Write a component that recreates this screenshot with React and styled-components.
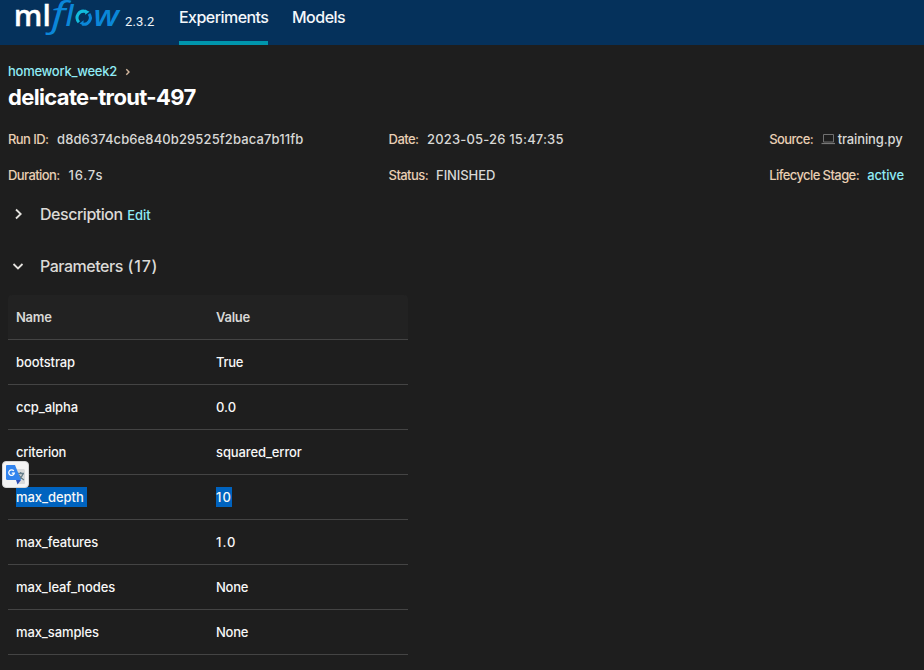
import React from 'react';
import styled, { createGlobalStyle } from 'styled-components';

const GlobalStyle = createGlobalStyle`
  * { box-sizing: border-box; }
  html, body { margin: 0; background: #1e1e1e; }
  body {
    height: 670px;
    overflow: hidden;
    color: #dcdad7;
    font-family: Inter, Roboto, sans-serif;
    font-size: 13px;
    font-weight: 450;
    line-height: 20px;
  }
  a { text-decoration: none; }
`;

const Text = styled.span`
  white-space: nowrap;
  letter-spacing: ${(p) => p.$track || 0}px;
`;

const Header = styled.header`
  display: flex;
  height: 45px;
  background: #05315b;
  color: #fff;
`;

const Logo = styled.svg`
  display: block;
  flex: none;
  width: 125px;
  height: 45px;
`;

const Version = styled(Text)`
  width: 54px;
  padding-top: 12px;
  font-family: Roboto, sans-serif;
  font-size: 13px;
  color: #f0f4f8;
`;

const Nav = styled.nav`
  display: flex;
  gap: 24px;
`;

const NavLink = styled.a`
  height: 45px;
  width: ${(p) => p.$width}px;
  padding-top: 7px;
  border-bottom: 4px solid ${(p) => (p.$active ? '#0096ad' : 'transparent')};
  font-size: 16px;
  color: #f4f7fa;
`;

const Page = styled.main`
  padding: 16px 8px 0;
`;

const Breadcrumb = styled.div`
  display: flex;
  align-items: center;
  height: 20px;
  color: #90ebf5;
`;

const Title = styled.h1`
  margin: 0;
  height: 32px;
  font-size: 22px;
  line-height: 33px;
  font-weight: 700;
  color: #fff;
`;

const Metadata = styled.dl`
  display: grid;
  grid-template-columns: 380.6px 380.6px 1fr;
  row-gap: 16px;
  margin: 16px 0 0;
`;

const Item = styled.div`
  display: flex;
  align-items: center;
  height: 20px;
`;

const Label = styled.dt`
  width: ${(p) => p.$width}px;
  flex: none;
  white-space: nowrap;
  letter-spacing: -0.58px;
  color: #e9cfb4;
`;

const Value = styled.dd`
  display: flex;
  align-items: center;
  margin: 0;
  color: ${(p) => (p.$link ? '#90ebf5' : '#d8d8d6')};
`;

const Section = styled.section`
  display: flex;
  align-items: center;
  height: 24px;
  margin-top: ${(p) => p.$top}px;
  font-size: 16px;
`;

const Toggle = styled.svg`
  width: 20px;
  height: 20px;
  margin-right: 12px;
  fill: none;
  stroke: #e4e2de;
  stroke-width: 1.8;
`;

const Edit = styled.a`
  margin: 2px 0 0 4.5px;
  font-size: 13px;
  color: #90ebf5;
`;

const Count = styled(Text)`
  margin-left: 4.5px;
`;

const Table = styled.div`
  width: 400px;
  margin-top: 17px;
`;

const Row = styled.div`
  position: relative;
  display: grid;
  grid-template-columns: 200px 200px;
  align-items: center;
  height: 45px;
  border-bottom: 1px solid #444;
  color: #f7f7f7;
  font-weight: 500;
`;

const HeadRow = styled(Row)`
  background: #222;
  border-radius: 4px 4px 0 0;
  color: #d8d8d6;
  font-weight: 600;
  letter-spacing: -0.25px;
`;

const Cell = styled.div`
  padding-left: 8px;
`;

const Mark = styled(Text)`
  display: inline-block;
  height: 20px;
  width: ${(p) => p.$width}px;
  background: #0063bf;
  vertical-align: top;
`;

const TranslateBadge = styled.div`
  position: absolute;
  left: -6px;
  top: -14px;
  width: 27px;
  height: 27px;
  border-radius: 4px;
  border: 1px solid #d4d4d4;
  background: #f4f4f4;
`;

const Drawing = styled.svg`
  display: block;
  flex: none;
`;

const rows = [
  ['bootstrap', -0.1, 'True', -0.25],
  ['ccp_alpha', -0.1, '0.0', 0],
  ['criterion', -0.2, 'squared_error', -0.12],
  ['max_depth', -0.05, '10', 1.1, true],
  ['max_features', -0.12, '1.0', 1],
  ['max_leaf_nodes', -0.1, 'None', -0.25],
  ['max_samples', -0.1, 'None', -0.25],
];

function MlflowLogo() {
  return (
    <Logo viewBox="0 0 125 45">
      <text x="13.8" y="26" fontFamily="Open Sans" fontWeight="600" fontSize="28.5" fill="#fff" stroke="#fff" strokeWidth="0.3" textLength="37" lengthAdjust="spacingAndGlyphs">ml</text>
      <g fill="#0b87d8" fontFamily="Open Sans" fontStyle="italic" fontWeight="500">
        <text x="51" y="26.5" fontSize="34" textLength="14.5" lengthAdjust="spacingAndGlyphs">f</text>
        <text x="65.5" y="26" fontSize="29" fontWeight="600">l</text>
        <text x="93.5" y="26" fontSize="28.5" fontWeight="600" textLength="25.5" lengthAdjust="spacingAndGlyphs">w</text>
      </g>
      <g fill="none" strokeWidth="3">
        <path d="M78.9 22.2A6.5 6.5 0 0 1 85.8 11.6" stroke="#12bcdc" />
        <path d="M89 13.8A6.5 6.5 0 0 1 82.2 24" stroke="#0b87d8" />
      </g>
      <path d="M85 9.6L89.5 11.8L85.2 14.8Z" fill="#12bcdc" />
      <path d="M83.6 20.3L79.5 23.4L83.4 25.6Z" fill="#0b87d8" />
    </Logo>
  );
}

function TranslateIcon() {
  return (
    <Drawing width="25" height="25" viewBox="0 0 25 25">
      <path d="M11 7H20.5Q22 7 22 8.5V21Q22 22 21 22H15Z" fill="#d9dadb" />
      <path d="M14 11.5H21M17.7 10V11.5M20 12C19 15 17 17 15 18M16 13C17 15.5 19 17 21 18" stroke="#667f8b" strokeWidth="1.3" fill="none" />
      <path d="M13 18H18L14.5 22.5Z" fill="#2c4fb8" />
      <path d="M4 3H12L18 18H4.5Q3 18 3 16.5V4Q3 3 4 3Z" fill="#3284ee" />
      <path d="M10.8 8.9A2.8 2.8 0 1 0 11.3 11.2H8.8" stroke="#fff" strokeWidth="1.3" fill="none" />
    </Drawing>
  );
}

export default function App() {
  return (
    <>
      <GlobalStyle />
      <Header>
        <MlflowLogo />
        <Version $track={0.15}>2.3.2</Version>
        <Nav>
          <NavLink $active $width={89}><Text $track={-0.55}>Experiments</Text></NavLink>
          <NavLink $width={54}><Text $track={-0.5}>Models</Text></NavLink>
        </Nav>
      </Header>
      <Page>
        <Breadcrumb>
          <Text $track={-0.27}>homework_week2</Text>
          <Drawing width="20" height="20" viewBox="0 0 20 20">
            <path d="M9.3 8.2L12 11L9.3 13.8" stroke="#d5b99f" strokeWidth="1.4" fill="none" />
          </Drawing>
        </Breadcrumb>
        <Title><Text $track={-0.65}>delicate-trout-497</Text></Title>
        <Metadata>
          <Item><Label $width={49}>Run ID:</Label><Value><Text $track={0.11}>d8d6374cb6e840b29525f2baca7b11fb</Text></Value></Item>
          <Item><Label $width={38.5}>Date:</Label><Value><Text $track={0.17}>2023-05-26 15:47:35</Text></Value></Item>
          <Item>
            <Label $width={51.5}>Source:</Label>
            <Value>
              <Drawing width="17" height="13" viewBox="0 0 17 13">
                <path d="M2.5 1.5H12.5V9H2.5Z" stroke="#707070" fill="none" />
                <path d="M0.5 10.5H14" stroke="#777" strokeWidth="1.2" />
              </Drawing>
              <Text $track={-0.12}>training.py</Text>
            </Value>
          </Item>
          <Item><Label $width={60.5}>Duration:</Label><Value><Text $track={0.8}>16.7s</Text></Value></Item>
          <Item><Label $width={47.5}>Status:</Label><Value><Text $track={-0.1}>FINISHED</Text></Value></Item>
          <Item><Label $width={98}>Lifecycle Stage:</Label><Value $link><Text $track={-0.1}>active</Text></Value></Item>
        </Metadata>
        <Section $top={17}>
          <Toggle viewBox="0 0 20 20"><path d="M8 5.5L12.7 10L8 14.5" /></Toggle>
          <Text $track={-0.47}>Description</Text>
          <Edit><Text>Edit</Text></Edit>
        </Section>
        <Section $top={28}>
          <Toggle viewBox="0 0 20 20"><path d="M5.5 8L10 12.4L14.5 8" /></Toggle>
          <Text $track={-0.47}>Parameters</Text>
          <Count $track={0.85}>(17)</Count>
        </Section>
        <Table>
          <HeadRow><Cell>Name</Cell><Cell>Value</Cell></HeadRow>
          {rows.map(([name, nt, value, vt, selected]) => (
            <Row key={name}>
              <Cell>{selected ? <Mark $track={nt} $width={71}>{name}</Mark> : <Text $track={nt}>{name}</Text>}</Cell>
              <Cell>{selected ? <Mark $track={vt} $width={16}>{value}</Mark> : <Text $track={vt}>{value}</Text>}</Cell>
              {selected && <TranslateBadge><TranslateIcon /></TranslateBadge>}
            </Row>
          ))}
        </Table>
      </Page>
    </>
  );
}
